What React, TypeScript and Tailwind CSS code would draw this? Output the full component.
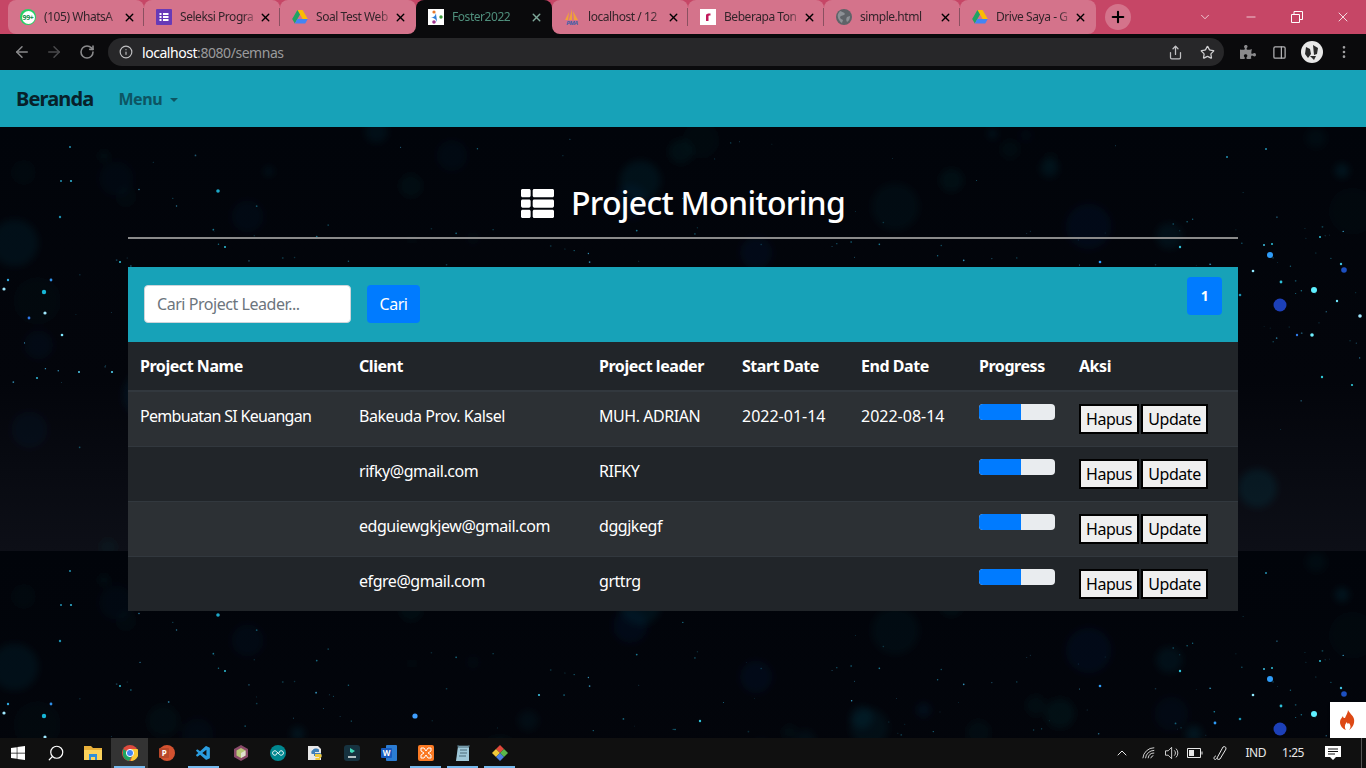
import { ReactNode } from 'react';
import { ArrowLeft, ArrowRight, RotateCw, Info, Star, PanelRight, MoreVertical, ChevronDown, Minus, X, Plus, ChevronUp, Search, Share } from 'lucide-react';
import { FaThList, FaWindows, FaPuzzlePiece } from 'react-icons/fa';
import { VscVscode } from 'react-icons/vsc';

// --- starfield tile, drawn once and repeated down the page ---
function rng(seed: number) {
  let s = seed;
  return () => {
    s = (s * 16807) % 2147483647;
    return (s - 1) / 2147483646;
  };
}

const r1 = rng(4242);
const SMALL_STARS = Array.from({ length: 240 }, () => {
  const inBand = r1() > 0.35;
  return {
    x: r1() * 1366,
    y: inBand ? 90 + r1() * 170 : 10 + r1() * 340,
    r: 0.35 + r1() * 0.55,
    o: 0.25 + r1() * 0.6,
    c: r1() > 0.6 ? '#3fb8e8' : '#1f9fc0',
  };
});
const BOKEH = Array.from({ length: 90 }, () => ({
  x: r1() * 1366,
  y: r1() * 424,
  r: 4 + r1() * 20,
  o: 0.05 + r1() * 0.1,
  c: r1() > 0.66 ? '#1c6f8c' : r1() > 0.5 ? '#1a3f78' : '#14504f',
}));
const BRIGHT_STARS: [number, number, number, string][] = [
  [4, 162, 1.6, '#9fe8ff'], [8, 153, 1.2, '#2fa8e0'], [44, 165, 2.2, '#19b6d6'], [51, 153, 1.4, '#2f8fe8'],
  [45, 186, 1.6, '#9fe8ff'], [62, 208, 1.3, '#7fe8ff'], [79, 245, 1, '#4fd0f0'], [112, 245, 1.1, '#4fd0f0'],
  [37, 251, 1.1, '#2fb0d0'], [71, 54, 1.1, '#2fb0d0'], [61, 54, 1, '#1f8fb0'], [29, 191, 1.4, '#2f78e8'],
  [218, 64, 1.8, '#1fa8c8'], [415, 165, 2.6, '#3f9fff'], [300, 190, 1.2, '#3fc0e0'], [539, 144, 1.1, '#3fc0e0'],
  [1270, 128, 3, '#2f9cf8'], [1253, 144, 1.3, '#8fe8ff'], [1281, 155, 1.4, '#2fc0d8'], [1314, 163, 3, '#5ff0ff'],
  [1280, 178, 6.5, '#1f3fb8'], [1360, 189, 1.8, '#9fe8ff'], [1312, 208, 1.8, '#6ff0ff'], [1264, 118, 1, '#3fc0e0'],
  [1341, 137, 1.2, '#3fc0e0'], [1344, 143, 2.8, '#1f4fc0'], [1322, 250, 1.2, '#2fc8d8'], [1352, 258, 1.1, '#2fc8d8'],
  [1297, 208, 1.2, '#2f78e8'], [1337, 174, 1.2, '#6fe8ff'], [1272, 117, 1, '#2fc0d8'],
  [1227, 30, 1, '#1f8fb0'], [1266, 22, 1, '#1f8fb0'], [1240, 168, 1.3, '#1f8fb0'],
  [1215, 172, 1.4, '#2f9cf8'], [1180, 120, 1.2, '#2fc0d8'], [700, 170, 1.2, '#2fc0d8'],
  [60, 90, 1.2, '#1f8fb0'], [120, 135, 1, '#2fc0d8'], [225, 120, 1, '#2fc0d8'],
  [1100, 135, 1.3, '#2f9cf8'], [1320, 110, 1, '#2fc0d8'], [70, 20, 1, '#1f8fb0'],
];

function Starfield() {
  return (
    <svg className="absolute inset-0 h-full w-full" aria-hidden="true">
      <defs>
        <linearGradient id="tile-fade" x1="0" y1="0" x2="0" y2="1">
          <stop offset="0" stopColor="#01040a" />
          <stop offset="0.6" stopColor="#03050b" />
          <stop offset="1" stopColor="#0d0f17" />
        </linearGradient>
        <filter id="soft" x="-20%" y="-20%" width="140%" height="140%">
          <feGaussianBlur stdDeviation="3.5" />
        </filter>
        <filter id="glow" x="-5%" y="-5%" width="110%" height="110%">
          <feGaussianBlur stdDeviation="0.5" />
        </filter>
        <pattern id="tile" patternUnits="userSpaceOnUse" width="1366" height="424">
          <rect width="1366" height="424" fill="url(#tile-fade)" />
          <g filter="url(#soft)">
            {BOKEH.map((b, i) => (
              <circle key={i} cx={b.x} cy={b.y} r={b.r} fill={b.c} opacity={b.o} />
            ))}
          </g>
          {SMALL_STARS.map((s, i) => (
            <circle key={i} cx={s.x} cy={s.y} r={s.r} fill={s.c} opacity={s.o} />
          ))}
          <g filter="url(#glow)">
            {BRIGHT_STARS.map(([x, y, r, c], i) => (
              <circle key={i} cx={x} cy={y} r={r} fill={c} />
            ))}
          </g>
        </pattern>
      </defs>
      <rect width="100%" height="100%" fill="url(#tile)" />
    </svg>
  );
}

// --- favicons ---
function Drive() {
  return (
    <svg viewBox="0 0 16 16" className="h-4 w-4 shrink-0">
      <path d="M5.4 1h5.2l5.2 9h-5.2z" fill="#fbbc04" />
      <path d="M5.4 1 .2 10l2.600 4.600L8 5.500z" fill="#1fa463" />
      <path d="M2.800 14.600h10.400l2.600-4.600H5.400z" fill="#4285f4" />
    </svg>
  );
}

function WhatsAppFav() {
  return (
    <span className="relative flex h-4 w-4 shrink-0 items-center justify-center rounded-full bg-[#25d366]">
      <span className="flex h-[13px] w-[13px] items-center justify-center rounded-full bg-white text-[7px] leading-none font-bold tracking-[-0.4px] text-[#128c4a]">99+</span>
    </span>
  );
}

function FormsFav() {
  return (
    <svg viewBox="0 0 16 16" className="h-4 w-4 shrink-0">
      <rect width="16" height="16" rx="1" fill="#673ab7" />
      <path d="M3.500 4h2v2h-2zM7 4h5.500v2H7zM3.500 7h2v2h-2zM7 7h5.500v2H7zM3.500 10h2v2h-2zM7 10h5.500v2H7z" fill="#fff" />
    </svg>
  );
}

function FosterFav() {
  return (
    <svg viewBox="0 0 16 16" className="h-4 w-4 shrink-0">
      <rect width="16" height="16" fill="#fff" />
      <circle cx="6" cy="3" r="1.600" fill="#e8792b" />
      <circle cx="13" cy="8" r="1.700" fill="#3a9a3a" />
      <circle cx="6" cy="13" r="1.800" fill="#a0358f" />
      <path d="M2 8c3 1 5 0 6-4 0 3 1 6 1 9-1-3-3-4-7-5z" fill="#2f7fd8" />
    </svg>
  );
}

function PmaFav() {
  return (
    <svg viewBox="0 0 16 16" className="h-4 w-4 shrink-0">
      <path d="M8 0 5 11h3zM9 2l5 9h-4zM5 3 1 11h3z" fill="#f0a13a" />
      <text x="8" y="15.500" textAnchor="middle" fontSize="6" fontWeight="700" fontStyle="italic" fill="#3f5fa8">PMA</text>
    </svg>
  );
}

function RFav() {
  return (
    <svg viewBox="0 0 16 16" className="h-4 w-4 shrink-0">
      <rect width="16" height="16" fill="#fff" />
      <path d="M6 12V6.500C6 5 7 4.500 10.500 4.500V6.500C8.500 6.500 8.500 6.800 8.500 7.500V12z" fill="#c2185b" />
    </svg>
  );
}

function GlobeFav() {
  return (
    <svg viewBox="0 0 16 16" className="h-4 w-4 shrink-0">
      <circle cx="8" cy="8" r="8" fill="#5f6368" />
      <path d="M4 2c2 1 4 1 5 3-1 2-4 1-5 3 0 2 2 2 3 3l-1 3C3 12 1 8 2 5zM11 8l3-1c0 3-1 5-3 6-1-2-1-3 0-5z" fill="#8d9196" />
    </svg>
  );
}

type Tab = { title: string; icon: ReactNode; shape: string; behind?: string; active?: boolean };

const TABS: Tab[] = [
  { title: '(105) WhatsA', icon: <WhatsAppFav />, shape: 'rounded-bl-lg' },
  { title: 'Seleksi Progra', icon: <FormsFav />, shape: '' },
  { title: 'Soal Test Web', icon: <Drive />, shape: 'rounded-br-lg', behind: 'bg-[linear-gradient(to_top,#0a0a0c_8px,transparent_8px)]' },
  { title: 'Foster2022', icon: <FosterFav />, shape: '', active: true },
  { title: 'localhost / 12', icon: <PmaFav />, shape: 'rounded-bl-lg', behind: 'bg-[linear-gradient(to_top,#0a0a0c_8px,transparent_8px)]' },
  { title: 'Beberapa Ton', icon: <RFav />, shape: '' },
  { title: 'simple.html', icon: <GlobeFav />, shape: '' },
  { title: 'Drive Saya - G', icon: <Drive />, shape: 'rounded-br-lg' },
];

function TabStrip() {
  return (
    <div className="flex h-[34px] shrink-0 items-end bg-[#c64666] pl-2">
      {TABS.map((tab, i) => (
        <div key={tab.title} className={`w-[136px] ${tab.behind ?? ''}`}>
          <div
            className={
              tab.active
                ? 'flex h-[34px] items-center rounded-t-lg bg-[#0a0a0c] pr-[9px] pl-3 text-[#4f8f7c]'
                : `flex h-[34px] items-center rounded-t-lg bg-[#d4738b] pr-[9px] pl-3 text-[#33242a] ${tab.shape}`
            }
          >
            {tab.icon}
            <span className="ml-2 flex-1 overflow-hidden text-xs whitespace-nowrap [mask-image:linear-gradient(to_right,black_80%,transparent)]">
              {tab.title}
            </span>
            <X size={13} strokeWidth={2.6} className={tab.active ? 'shrink-0 text-[#7fa89a]' : 'shrink-0 text-black'} />
            {i < 7 && !tab.active && i !== 2 && <span className="-mr-[9px] ml-[7px] h-[18px] w-px shrink-0 bg-[#8a5060]" />}
          </div>
        </div>
      ))}
      <div className="mb-[4px] ml-[9px] flex h-[26px] w-[26px] items-center justify-center self-end rounded-full bg-[#d4738b]">
        <Plus size={18} strokeWidth={2.8} className="text-black" />
      </div>
      <div className="ml-auto flex h-full items-center text-white">
        <span className="flex w-[46px] justify-center"><ChevronDown size={14} strokeWidth={1.2} /></span>
        <span className="flex w-[46px] justify-center"><Minus size={14} strokeWidth={1.2} /></span>
        <span className="flex w-[46px] justify-center">
          <svg viewBox="0 0 12 12" className="h-3 w-3" fill="none" stroke="currentColor">
            <path d="M.5 3.500h8v8h-8zM3 3.500V.5h8.500v8H8.500" />
          </svg>
        </span>
        <span className="flex w-[46px] justify-center"><X size={16} strokeWidth={1.2} /></span>
      </div>
    </div>
  );
}

function Toolbar() {
  return (
    <div className="flex h-[36px] shrink-0 items-center bg-[#0a0a0c]">
      <span className="flex w-[31px] justify-end"><ArrowLeft size={18} className="text-[#8a8a8c]" /></span>
      <span className="flex w-[32px] justify-end"><ArrowRight size={18} className="text-[#4a4a4c]" /></span>
      <span className="flex w-[32px] justify-end"><RotateCw size={16} strokeWidth={2.4} className="text-[#8a8a8c]" /></span>
      <div className="ml-[13px] flex h-[28px] w-[1116px] items-center rounded-full bg-[#272729] pr-[9px] pl-[11px]">
        <Info size={14} className="text-[#c0c0c2]" />
        <span className="ml-[9px] text-[14px] text-[#9a9a9c]">
          <span className="text-white">localhost</span>:8080/semnas
        </span>
        <Share size={15} className="ml-auto text-[#c0c0c2]" />
        <Star size={15} className="ml-[17px] text-[#d0d0d2]" />
      </div>
      <FaPuzzlePiece size={16} className="ml-[16px] text-[#8a8a8c]" />
      <PanelRight size={15} className="ml-[16px] text-[#b0b0b2]" />
      <svg viewBox="0 0 22 22" className="ml-[14px] h-[22px] w-[22px]">
        <circle cx="11" cy="11" r="11" fill="#e8e8e8" />
        <path d="M5 6l4 2 1 5-3 4-3-4zM12 4l5 3-1 6-3 1zM9 15h6l-2 4z" fill="#2a2a2a" />
      </svg>
      <MoreVertical size={16} className="ml-[13px] text-[#a0a0a2]" />
    </div>
  );
}

// --- page itself ---
const ROWS = [
  { project: 'Pembuatan SI Keuangan', client: 'Bakeuda Prov. Kalsel', leader: 'MUH. ADRIAN', start: '2022-01-14', end: '2022-08-14' },
  { project: '', client: 'rifky@gmail.com', leader: 'RIFKY', start: '', end: '' },
  { project: '', client: 'edguiewgkjew@gmail.com', leader: 'dggjkegf', start: '', end: '' },
  { project: '', client: 'efgre@gmail.com', leader: 'grttrg', start: '', end: '' },
];

function ProjectTable() {
  return (
    <table className="w-full table-fixed bg-[#212529] text-white">
      <thead>
        <tr className="h-[49px] border-b-2 border-[#32383e] text-left">
          <th className="w-[219px] px-3 font-bold">Project Name</th>
          <th className="w-[240px] px-3 font-bold">Client</th>
          <th className="w-[143px] px-3 font-bold">Project leader</th>
          <th className="w-[119px] px-3 font-bold">Start Date</th>
          <th className="w-[118px] px-3 font-bold">End Date</th>
          <th className="w-[100px] px-3 font-bold">Progress</th>
          <th className="w-[171px] px-3 font-bold">Aksi</th>
        </tr>
      </thead>
      <tbody>
        {ROWS.map((row, i) => (
          <tr key={row.client} className={i % 2 === 0 ? 'bg-[#2c3034]' : ''}>
            <td className="border-t border-[#32383e] p-3 align-top tracking-[-0.7px]">{row.project}</td>
            <td className="border-t border-[#32383e] p-3 align-top">{row.client}</td>
            <td className="border-t border-[#32383e] p-3 align-top">{row.leader}</td>
            <td className="border-t border-[#32383e] p-3 align-top tracking-normal">{row.start}</td>
            <td className="border-t border-[#32383e] p-3 align-top tracking-normal">{row.end}</td>
            <td className="border-t border-[#32383e] p-3 align-top">
              <div className="flex h-4 w-[76px] overflow-hidden rounded bg-[#e9ecef]">
                <div className="h-full w-[42px] bg-[#007bff]" />
              </div>
            </td>
            <td className="border-t border-[#32383e] p-3 align-top">
              <div className="flex gap-[2px] text-black">
                <button className="h-[30px] w-[60px] border-2 border-black bg-[#efefef]">Hapus</button>
                <button className="h-[30px] w-[67px] border-2 border-black bg-[#efefef]">Update</button>
              </div>
            </td>
          </tr>
        ))}
      </tbody>
    </table>
  );
}

// --- taskbar ---
function TaskIcon({ children, active, open }: { children: ReactNode; active?: boolean; open?: boolean }) {
  return (
    <div className={active ? 'relative flex h-[30px] w-[37px] items-center justify-center bg-[#333]' : 'relative flex h-[30px] w-[37px] items-center justify-center'}>
      {children}
      {open && <span className="absolute inset-x-[3px] bottom-0 h-[2px] bg-[#76b9ed]" />}
    </div>
  );
}

function Taskbar() {
  return (
    <div className="flex h-[30px] shrink-0 items-center bg-[#101010] text-white">
      <TaskIcon><FaWindows size={16} className="-ml-[2px]" /></TaskIcon>
      <TaskIcon><Search size={18} strokeWidth={1.6} className="-scale-x-100" /></TaskIcon>
      <TaskIcon>
        <svg viewBox="0 0 18 16" className="h-4 w-[18px]">
          <path d="M0 1h7l2 2h9v12H0z" fill="#e8b03a" />
          <path d="M0 5h18v10H0z" fill="#fbd35c" />
          <path d="M5 9h8v6h-2v-3H7v3H5z" fill="#2f8fd8" />
        </svg>
      </TaskIcon>
      <TaskIcon active open>
        <svg viewBox="0 0 16 16" className="h-4 w-4">
          <circle cx="8" cy="8" r="8" fill="#dd4b3e" />
          <path d="M8 8 1 4v4a7 7 0 0 0 6 8l4-7z" fill="#1da462" />
          <path d="M8 4h7.500a8 8 0 0 1-7 12l3-8z" fill="#fcc934" />
          <circle cx="8" cy="8" r="3.600" fill="#4285f4" stroke="#fff" />
        </svg>
      </TaskIcon>
      <TaskIcon>
        <svg viewBox="0 0 16 16" className="h-4 w-4">
          <circle cx="8" cy="8" r="8" fill="#d35230" />
          <rect x="0" y="3" width="10" height="10" rx="1" fill="#b7472a" />
          <text x="5" y="11" textAnchor="middle" fontSize="8" fontWeight="700" fill="#fff">P</text>
        </svg>
      </TaskIcon>
      <TaskIcon open><VscVscode size={17} className="text-[#2a9de0]" /></TaskIcon>
      <TaskIcon>
        <svg viewBox="0 0 16 16" className="h-4 w-4">
          <path d="M8 0l7 4v8l-7 4-7-4V4z" fill="#8a4a6a" />
          <path d="M8 3l4.500 2.500v5L8 13l-4.500-2.500v-5z" fill="#b8c878" />
          <path d="M8 8l4.500-2.500v5L8 13z" fill="#e0e0d0" />
        </svg>
      </TaskIcon>
      <TaskIcon>
        <svg viewBox="0 0 16 16" className="h-4 w-4">
          <circle cx="8" cy="8" r="8" fill="#00878f" />
          <path d="M7 8a2.200 2.200 0 1 1-.600-1.500L9.600 9.500A2.200 2.200 0 1 0 9 8" fill="none" stroke="#fff" />
        </svg>
      </TaskIcon>
      <TaskIcon>
        <svg viewBox="0 0 16 16" className="h-4 w-4">
          <path d="M1 1h10l3 3v11H1z" fill="#e8e8e8" />
          <path d="M6 5c0-2 6-2 6 0v2H8v1h5c2 0 2 5 0 5h-1v-2H7V9H5C4 9 4 5 6 5z" fill="#3f7fb8" />
          <path d="M8 9h6c1 1 1 4-1 4v2H9c-1 0-1-2 0-2h3v-1H8z" fill="#f0c83a" />
        </svg>
      </TaskIcon>
      <TaskIcon>
        <svg viewBox="0 0 16 16" className="h-4 w-4">
          <rect width="16" height="16" rx="3" fill="#16323f" />
          <path d="M4 12h8" stroke="#e8f0f0" strokeWidth="1.500" />
          <path d="M6 3l5 3-3 2-2-1z" fill="#3fd8b8" />
        </svg>
      </TaskIcon>
      <TaskIcon>
        <svg viewBox="0 0 16 16" className="h-4 w-4">
          <rect x="5" width="11" height="16" rx="1" fill="#2b7cd3" />
          <rect y="3" width="11" height="10" rx="1" fill="#185abd" />
          <text x="5.500" y="11" textAnchor="middle" fontSize="8" fontWeight="700" fill="#fff">W</text>
        </svg>
      </TaskIcon>
      <TaskIcon open>
        <svg viewBox="0 0 16 16" className="h-4 w-4">
          <rect width="16" height="16" rx="2" fill="#fb7a24" />
          <path d="M3 3h3l2 3 2-3h3v3l-3 2 3 2v3h-3L8 10l-2 3H3v-3l3-2-3-2z" fill="none" stroke="#fff" />
        </svg>
      </TaskIcon>
      <TaskIcon open>
        <svg viewBox="0 0 16 16" className="h-4 w-4">
          <path d="M3 1h11v15H1z" fill="#9fc8d8" />
          <path d="M3 0h11v2H3zM5 5h7M5 8h7M4 11h7" stroke="#4a6a78" fill="none" />
        </svg>
      </TaskIcon>
      <TaskIcon open>
        <svg viewBox="0 0 16 16" className="h-4 w-4">
          <path d="M8 0l4 4-4 4-4-4z" fill="#e0483a" />
          <path d="M12 4l4 4-4 4-4-4z" fill="#5ab84a" />
          <path d="M4 4l4 4-4 4-4-4z" fill="#f0c83a" />
          <path d="M8 8l4 4-4 4-4-4z" fill="#4a7fe0" />
        </svg>
      </TaskIcon>

      <div className="ml-auto flex h-full items-center text-[#e8e8e8]">
        <ChevronUp size={16} strokeWidth={1.500} />
        <svg viewBox="0 0 16 16" className="ml-[12px] h-[14px] w-[14px]" fill="none" stroke="currentColor">
          <path d="M1 14A13 13 0 0 1 14 2M4 14A10 10 0 0 1 14 5M7 14a7 7 0 0 1 7-6M10 14a4 4 0 0 1 3-3" />
        </svg>
        <svg viewBox="0 0 18 16" className="ml-[8px] h-[14px] w-[17px]" fill="none" stroke="currentColor">
          <path d="M1 5.500h3l4-4v13l-4-4H1zM11 5a4 4 0 0 1 0 6M13 3a7 7 0 0 1 0 10" />
        </svg>
        <svg viewBox="0 0 16 10" className="ml-[6px] h-[10px] w-[16px]" fill="none" stroke="currentColor">
          <path d="M.5.500h13v9H.5zM15 3.500v3" />
          <rect x="2" y="2" width="5" height="6" fill="currentColor" stroke="none" />
        </svg>
        <svg viewBox="0 0 16 16" className="ml-[9px] h-[16px] w-[16px]" fill="none" stroke="currentColor">
          <path d="M5 13 11 2c2-1 3 0 3 2L8 14c-2 1-3 0-3-1zM5 13c-1 2-3 2-3 0 0-1 1-2 2-2" />
        </svg>
        <span className="ml-[17px] text-xs">IND</span>
        <span className="ml-[16px] text-xs">1:25</span>
        <svg viewBox="0 0 16 16" className="ml-[21px] h-4 w-4" fill="#fff">
          <path d="M0 1h16v11h-5l-3 3-3-3H0z" />
          <path d="M3 4h10M3 6.500h10M3 9h7" stroke="#101010" />
        </svg>
        <span className="mr-[4px] ml-[20px] h-full w-px bg-[#555]" />
      </div>
    </div>
  );
}

export default function App() {
  return (
    <div className="flex h-screen w-screen flex-col overflow-hidden bg-black font-['Noto_Sans',sans-serif] text-base tracking-[-0.45px]">
      <TabStrip />
      <Toolbar />

      <nav className="flex h-[57px] shrink-0 items-center bg-[#17a2b8] px-4">
        <span className="text-xl font-bold tracking-[-0.85px] text-[#07212a]">Beranda</span>
        <span className="ml-[25px] flex items-center gap-2 font-bold text-[#0d5563]">
          Menu
          <span className="mt-[2px] h-0 w-0 border-x-[4px] border-t-[4px] border-x-transparent border-t-[#0d5563]" />
        </span>
      </nav>

      <main className="relative flex-1 overflow-hidden px-[128px]">
        <Starfield />
        <div className="relative">
          <h1 className="flex h-[110px] items-center justify-center gap-[17px] pt-[42px] text-[32px] font-medium tracking-[-0.7px] text-white">
            <FaThList size={33} />
            Project Monitoring
          </h1>
          <hr className="border-t-2 border-[#8a8a8a]" />

          <div className="mt-[28px] flex h-[75px] bg-[#17a2b8] pt-[18px] pl-4">
            <input
              placeholder="Cari Project Leader..."
              className="h-[38px] w-[207px] rounded border border-[#ced4da] bg-white px-3 text-base placeholder:text-[#6c757d]"
            />
            <button className="ml-4 h-[38px] w-[53px] rounded bg-[#007bff] text-white">Cari</button>
            <span className="mt-[-8px] mr-4 ml-auto flex h-[38px] w-[35px] items-center justify-center rounded bg-[#007bff] text-sm font-bold text-white">1</span>
          </div>

          <ProjectTable />
        </div>

        {/* framework debug toolbar tab, sits over the page */}
        <div className="absolute right-0 bottom-0 flex h-[36px] w-[36px] items-center justify-center bg-white shadow">
          <svg viewBox="0 0 16 20" className="h-[20px] w-[16px]">
            <path d="M8 0c1 3 5 5 6 9 1 5-2 9-5 11 2-2 2-5 0-7-1 1-2 1-2-1-2 2-3 5-1 8-3-1-6-4-6-8 0-3 2-4 3-6 0 2 1 2 2 2 1-3 3-5 3-8z" fill="#dd4814" />
          </svg>
        </div>
      </main>

      <Taskbar />
    </div>
  );
}
